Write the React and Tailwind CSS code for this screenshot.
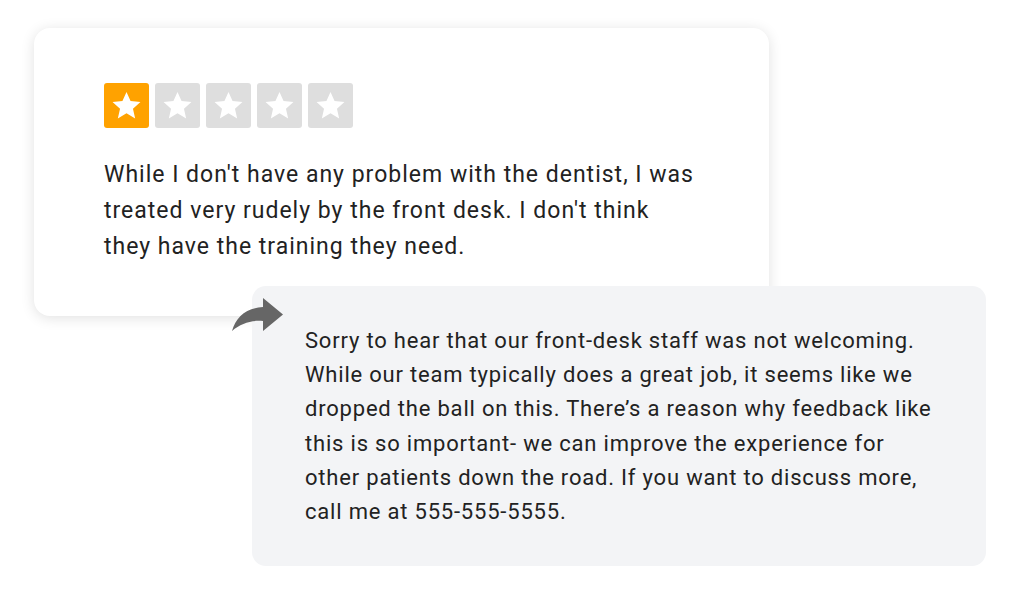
const Star = ({ active }) => (
  <div className={`flex items-center justify-center w-[45px] h-[45px] rounded-[3px] ${active ? 'bg-[#ffa200]' : 'bg-[#dedede]'}`}>
    <svg viewBox="0 0 24 24" className="w-[33px] h-[33px]" fill="#ffffff">
      <path d="M12 2.2l2.95 6.6 7.2.7-5.45 4.8 1.6 7.1L12 17.7l-6.3 3.7 1.6-7.1L1.85 9.5l7.2-.7z" />
    </svg>
  </div>
);

const ReplyArrow = () => (
  <svg viewBox="0 0 52 38" className="absolute -left-[20px] top-[9px] w-[52px] h-[38px]" fill="#666666">
    <path d="M31 3 L51 19.5 L31 36 L31 26 C20 25 9 28 0 36 C4 22 14 13 31 12 Z" />
  </svg>
);

export default function App() {
  return (
    <div className="w-[1024px] h-[604px] bg-white pt-[28px] pl-[34px] font-['Roboto',sans-serif] text-[#222222]">
      {/* review card */}
      <div className="relative z-0 w-[735px] h-[288px] bg-white rounded-[16px] shadow-[0_2px_14px_rgba(0,0,0,0.12)] pt-[55px] pl-[70px]">
        <div className="flex gap-[6px]">
          <Star active />
          <Star />
          <Star />
          <Star />
          <Star />
        </div>
        <p className="mt-[29px] text-[23px] leading-[36px] tracking-[1px] whitespace-nowrap">
          While I don't have any problem with the dentist, I was<br />
          treated very rudely by the front desk. I don't think<br />
          they have the training they need.
        </p>
      </div>

      {/* reply card */}
      <div className="relative z-10 -mt-[30px] ml-[218px] w-[734px] h-[280px] bg-[#f3f4f6] rounded-[14px] pt-[38px] pl-[53px]">
        <ReplyArrow />
        <p className="text-[22px] leading-[34.2px] tracking-[0.8px] whitespace-nowrap">
          Sorry to hear that our front-desk staff was not welcoming.<br />
          While our team typically does a great job, it seems like we<br />
          dropped the ball on this. There’s a reason why feedback like<br />
          this is so important- we can improve the experience for<br />
          other patients down the road. If you want to discuss more,<br />
          call me at 555-555-5555.
        </p>
      </div>
    </div>
  );
}
